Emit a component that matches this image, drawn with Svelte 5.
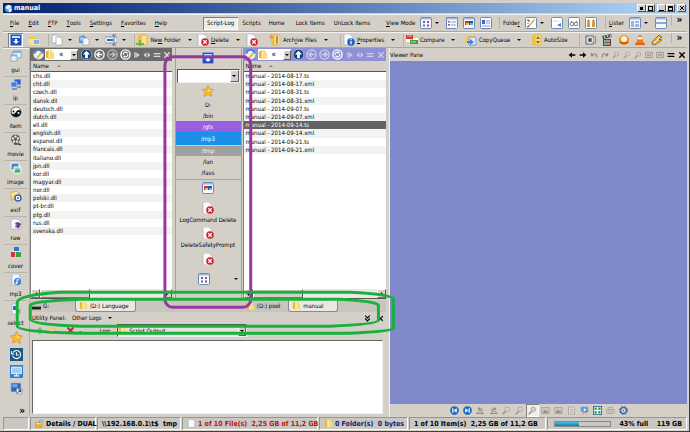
<script>
	const menus = ['File', 'Edit', 'FTP', 'Tools', 'Settings', 'Favorites', 'Help'];
	const scripts = ['Scripts', 'Home'];
	const locks = ['Lock Items', 'UnLock Items'];

	const toolGroups = [
		{ name: 'nav', items: [{ icon: 'down', on: true }, { icon: 'openfolder' }] },
		{ name: 'clip', items: [{ icon: 'copy', drop: true }, { icon: 'paste', drop: true }, { icon: 'rename', drop: true }] },
		{ name: 'new', items: [{ icon: 'newfolder', label: 'New Folder', key: 2, drop: true }] },
		{ name: 'delete', items: [{ icon: 'delete', label: 'Delete', key: 0, drop: true }, { icon: 'delete' }] },
		{ name: 'archive', items: [{ icon: 'archive', label: 'Archive Files', key: 4, drop: true }] },
		{ name: 'props', items: [{ icon: 'props', label: 'Properties', key: 0, drop: true }] },
		{ name: 'compare', items: [{ icon: 'compare', label: 'Compare', drop: true }] },
		{ name: 'queue', items: [{ icon: 'queue', label: 'CopyQueue', drop: true }] },
		{ name: 'size', items: [{ icon: 'autosize', label: 'AutoSize' }] },
		{ name: 'apps', items: [{ icon: 'speaker' }, { icon: 'clapper' }, { icon: 'ball' }, { icon: 'cone' }, { icon: 'bolt' }] }
	];

	const side = ['gui', 'ip', 'item', 'movie', 'image', 'exif', 'raw', 'cover', 'mp3', 'select'];
	const sideIcons = ['star', 'clock', 'monitor', 'shortcut'];

	const leftFiles = ['chs', 'cht', 'czech', 'dansk', 'deutsch', 'dutch', 'ell', 'english', 'espanol', 'francais',
		'italiano', 'jpn', 'kor', 'magyar', 'nor', 'polski', 'pt-br', 'ptg', 'rus', 'svenska'].map((n) => n + '.dll');
	const rightFiles = ['08-17', '08-31', '09-07', '09-14', '09-21']
		.flatMap((d) => [`manual - 2014-${d}.ts`, `manual - 2014-${d}.xml`]);
	let selected = $state('manual - 2014-09-14.ts');

	const viewerTop = ['back', 'fwd', 'undo', 'redo', 'zoomg', 'zoomg', 'zoomg', 'fit', 'fit', 'bars', 'close'];
	const viewerBottom = ['first', 'last', 'rotl', 'rotr', 'zoomg', 'zoomg', 'zoomg', 'pic', 'pic', 'sheet', 'present', 'expand', 'print', 'gear'];
	const used = 43;
</script>

{#snippet icon(name)}
	<svg class="icon" viewBox="0 0 12 12" aria-hidden="true">
		{#if name === 'app'}
			<circle cx="6" cy="6" r="5" fill="#4aa0e8" /><path d="M2 4l4-3 4 2-2 3-4 1z" fill="#e8f6ff" /><path d="M6 7l4-1v4l-3 1z" fill="#fff" />
		{:else if name === 'down' || name === 'script'}
			<rect x="0" y="0" width="12" height="12" rx="1" fill="#7fa3dd" /><rect x="1" y="1" width="10" height="10" fill="#2450b4" /><rect x="2" y="2" width="8" height="2" fill="#cfe0fa" /><path d="M6 10L3 7h2V5h2v2h2z" fill="#fff" />
		{:else if name === 'openfolder'}
			<path d="M1 2h4l1 1h4v3H1z" fill="#ecc95c" /><path d="M0 5h11l1 6H2z" fill="#f8e398" /><path d="M6 6h5v4H6z" fill="#79b6ea" />
		{:else if name === 'folder'}
			<path d="M1 2l4-1v10l-4-1z" fill="#e3b93e" /><path d="M4 1h5v3h2v7H4z" fill="#f6dc7a" /><path d="M5 2h1v8H5z" fill="#fff5c4" />
		{:else if name === 'newfolder' || name === 'archive' || name === 'autosize'}
			<path d="M2 1l7-1v10l-7 2z" fill="#eec14a" /><path d="M5 1h6v10H5z" fill="#f9e08a" stroke="#c9982e" stroke-width=".5" />
			{#if name === 'newfolder'}<path d="M0 9h3V6h2v3h3v2H5v1H3v-1H0z" fill="#6cbb3c" />
			{:else if name === 'archive'}<path d="M0 2l3-2 1 3 1 1-3 1z" fill="#f2a127" /><path d="M7 2h2v8H7z" fill="#a78132" stroke="#fff" stroke-width=".5" stroke-dasharray="1" />
			{:else}<path d="M8 2l2 3H6zM8 10L6 7h4z" fill="#8c6a18" />{/if}
		{:else if name === 'copy'}
			<path d="M1 1h5l2 2v6H1z" fill="#f7f9fc" stroke="#8d99ab" stroke-width=".6" /><path d="M5 3h4l2 2v6H5z" fill="#fff" stroke="#8d99ab" stroke-width=".6" />
		{:else if name === 'paste'}
			<path d="M1 3l4-2 3 2v6H1z" fill="#5d94d8" /><path d="M5 4h4l2 2v5H5z" fill="#f4f8fd" stroke="#8497b5" stroke-width=".6" /><circle cx="4" cy="5" r="2" fill="#a5cdf2" />
		{:else if name === 'rename'}
			<path d="M0 3h12v6H0z" fill="#e8f0fb" stroke="#6580ae" stroke-width=".7" /><path d="M2 6h6" stroke="#396ab5" stroke-width="2" /><path d="M7 1h4M9 1v10M7 11h4" stroke="#50617e" stroke-width=".8" />
		{:else if name === 'delete'}
			<path d="M1 0h6l3 3v9H1z" fill="#fafbfd" stroke="#9aa3b2" stroke-width=".6" /><circle cx="8" cy="8" r="3.8" fill="#d6202a" /><path d="M6.3 6.3l3.4 3.4M9.7 6.3L6.3 9.7" stroke="#fff" stroke-width="1.3" />
		{:else if name === 'props'}
			<path d="M1 0h6l3 3v8H1z" fill="#f6f8fb" stroke="#9aa3b2" stroke-width=".6" /><circle cx="8" cy="8" r="3.8" fill="#2060c8" /><path d="M8 7v3.3M8 5v1.2" stroke="#fff" stroke-width="1.3" />
		{:else if name === 'compare'}
			<path d="M0 1h7v4H0z" fill="#d8362f" /><path d="M1 2h5" stroke="#f8b0a8" /><path d="M7 4h5v2H7zM0 5h4v3H0z" fill="#fff" /><path d="M4 6h8v4H4z" fill="#35a53c" /><path d="M5 8h5" stroke="#b4e8b0" />
		{:else if name === 'queue'}
			<path d="M1 1h5l1 1h3v8H0z" fill="#f0cc60" /><path d="M4 3h6l1 2v6H4z" fill="#d9e9fb" stroke="#5d87c6" stroke-width=".7" /><path d="M2 7h3V5l4 3-4 3V9H2z" fill="#3f81d8" />
		{:else if name === 'speaker'}
			<rect x="1" y="1" width="9" height="10" rx="2" fill="#8e9196" /><circle cx="6" cy="6" r="3.7" fill="#d8dadd" /><circle cx="6" cy="6" r="2" fill="#55595f" /><path d="M11 2q1 4 0 8" stroke="#777" fill="none" />
		{:else if name === 'clapper'}
			<path d="M1 2l9-2 1 3-9 2zM2 5h8v7H2z" fill="#4a4d50" /><path d="M3 2l1 2M6 1l1 2M9 1l1 2M3 7h6M3 10h6" stroke="#e9eaec" /><path d="M3 8h2v1H3z" fill="#3aa745" /><path d="M6 8h2v1H6z" fill="#d43" />
		{:else if name === 'ball'}
			<circle cx="6" cy="6" r="5" fill="#f08c1c" /><circle cx="6" cy="5" r="3" fill="#fff1d0" /><path d="M2 8q4 3 8 0" stroke="#b65308" stroke-width="1.5" fill="none" />
		{:else if name === 'cone'}
			<path d="M1 10l2-2h6l2 2v1H1z" fill="#e0660d" /><path d="M5 1h2l3 8H2z" fill="#f37b16" /><path d="M4.4 3.3h3.2l.8 2H3.6z" fill="#fff" />
		{:else if name === 'bolt'}
			<path d="M1 8l7-7 3 2-3 2 3 1-7 5-3-1z" fill="#efb51c" stroke="#6c6137" stroke-width=".8" /><path d="M3 9l6-6" stroke="#fff" />
		{:else if name === 'view1' || name === 'view2' || name === 'lister' || name === 'pane'}
			<rect x=".5" y=".5" width="11" height="11" rx="1" fill="#f4f8fe" stroke="#6b8ab8" /><path d="M1 1h10v1.5H1z" fill="#9dbbe5" />
			{#if name === 'view1'}<path d="M3 4h2v2H3zM7 7.5h2v2H7z" fill="#3e69c9" /><path d="M7 4h2v2H7zM3 7.5h2v2H3z" fill="#d9493c" />
			{:else if name === 'view2'}<path d="M2 4h2v1.5H2z" fill="#d9493c" /><path d="M2 7h2v1.5H2z" fill="#3e69c9" /><path d="M5 5h5M5 8h5" stroke="#88a3cb" />
			{:else if name === 'lister'}<path d="M2 4h3v6H2zM6 4h4v2H6zM6 7h4v3H6z" fill="#9cb6dc" />
			{:else}<path d="M1 5h10v2H1z" fill="#8aa9d8" />{/if}
		{:else if name === 'thumbs'}
			<rect x=".5" y=".5" width="11" height="11" rx="1" fill="#f4f8fe" stroke="#6b8ab8" /><path d="M1 1h10v1.5H1z" fill="#9dbbe5" /><path d="M2 4h4v4H2z" fill="#c33b2f" /><path d="M6 4h4v4H6z" fill="#2b4fa0" /><path d="M3 6h3v2H3z" fill="#f0c740" /><path d="M7 6h3v2H7z" fill="#5bb0e8" />
		{:else if name === 'tiles'}
			<rect x=".5" y=".5" width="11" height="11" rx="1" fill="#f4f8fe" stroke="#6b8ab8" /><path d="M2 3h3v4H2z" fill="#3568c8" /><path d="M6 4h4M6 6h4M2 9h8" stroke="#88a3cb" />
		{:else if name === 'edit'}
			<rect x=".5" y=".5" width="11" height="11" rx="1" fill="#fff" stroke="#6b8ab8" /><path d="M3 9l6-7 1 1-6 7z" fill="#d8a735" /><path d="M2 3h2v2M3 6v1" stroke="#29417a" fill="none" /><path d="M2 10l2-1" stroke="#333" />
		{:else if name === 'note'}
			<rect x=".5" y=".5" width="11" height="11" rx="1" fill="#fff" stroke="#6b8ab8" /><path d="M6 8l4-2v4z" fill="#5a7fc0" /><path d="M2 4h6" stroke="#cdd7e8" />
		{:else if name === 'glasses'}
			<rect x=".5" y=".5" width="11" height="11" rx="1" fill="#fff" stroke="#6b8ab8" /><circle cx="4" cy="7" r="1.8" fill="none" stroke="#777" /><circle cx="8" cy="7" r="1.8" fill="none" stroke="#777" /><path d="M3 4l1 1M9 4L8 5" stroke="#777" />
		{:else if name === 'locks'}
			<rect x=".5" y=".5" width="11" height="11" rx="1" fill="#fff" stroke="#6b8ab8" /><path d="M2 6h3v4H2zM7 6h3v4H7z" fill="#dc9a1b" /><path d="M3 6V3h1v3M8 6V3h1v3" stroke="#a06c12" fill="none" />
		{:else if name === 'wrench'}
			<circle cx="6" cy="6" r="5.5" fill="#eef0f5" stroke="#97a0b4" stroke-width=".5" /><path d="M2 5a4 4 0 0 1 8 0" stroke="#3e7ed0" stroke-width="2" fill="none" /><path d="M3 10l5-6 2 1-5 6z" fill="#efb430" />
		{:else if name === 'up'}
			<circle cx="6" cy="6" r="5.7" fill="#103f7c" stroke="#dce8f8" stroke-width=".6" /><path d="M6 2l4 4H7.5v4h-3V6H2z" fill="#fff" />
		{:else if name === 'left' || name === 'right'}
			<circle cx="6" cy="6" r="5" fill="none" stroke="currentColor" stroke-width="1.4" /><path d={name === 'left' ? 'M9 6H3.5M6 3.3L3.3 6 6 8.7' : 'M3 6h5.5M6 3.3L8.7 6 6 8.7'} fill="none" stroke="currentColor" stroke-width="1.7" />
		{:else if name === 'refresh'}
			<circle cx="6" cy="6" r="5" fill="none" stroke="currentColor" stroke-width="1.5" /><path d="M3.5 6.5a2.5 2.5 0 0 1 4-2.5M8.5 5.5a2.5 2.5 0 0 1-4 2.5" stroke="currentColor" stroke-width="1.2" fill="none" /><path d="M7 2.5l2 2-2.5.5zM5 9.5l-2-2L5.5 7z" fill="currentColor" />
		{:else if name === 'play'}
			<path d="M2 2h2v8H2zM5 2l5 4-5 4z" fill="currentColor" />
		{:else if name === 'split'}
			<path d="M5 2v8L1 6zM7 2v8l4-4z" fill="currentColor" />
		{:else if name === 'bars'}
			<path d="M1 4h10M1 8h10" stroke="currentColor" stroke-width="2" />
		{:else if name === 'close'}
			<path d="M2 2l8 8M10 2l-8 8" stroke="currentColor" stroke-width="2" />
		{:else if name === 'back'}
			<path d="M1 6l5-4v3h5v2H6v3z" fill="currentColor" />
		{:else if name === 'fwd'}
			<path d="M11 6L6 2v3H1v2h5v3z" fill="currentColor" />
		{:else if name === 'undo' || name === 'redo'}
			<path d={name === 'undo' ? 'M2 3v4h4M2 7q4-5 8-1v4' : 'M10 3v4H6M10 7Q6 2 2 6v4'} stroke="#8c8a84" stroke-width="1.6" fill="none" />
		{:else if name === 'zoomg'}
			<circle cx="7" cy="4.5" r="3" fill="#e8e6e1" stroke="#93918b" /><path d="M1 11l4-4" stroke="#93918b" stroke-width="1.8" /><path d="M5.7 4.5h2.6" stroke="#93918b" />
		{:else if name === 'fit'}
			<path d="M1 2h10v8H1z" fill="none" stroke="#908e88" stroke-width="1.2" /><path d="M3 4h6v4H3z" fill="#a9a7a1" />
		{:else if name === 'first' || name === 'last'}
			<circle cx="6" cy="6" r="5.5" fill="#1b6fd0" stroke="#0d4c9a" stroke-width=".5" /><path d={name === 'first' ? 'M3 3h1.5v6H3zM9 3v6L5 6z' : 'M7.5 3H9v6H7.5zM3 3v6l4-3z'} fill="#fff" />
		{:else if name === 'rotl' || name === 'rotr'}
			<path d={name === 'rotl' ? 'M1 10h9l-5-4zM4 4h4v3' : 'M2 10h9L7 6zM8 4H4v3'} fill="none" stroke="#8c8a84" stroke-width="1.3" /><path d={name === 'rotl' ? 'M2 4l3-3v5z' : 'M10 4L7 1v5z'} fill="#8c8a84" />
		{:else if name === 'pic'}
			<path d="M1 2h10v8H1z" fill="#c9c6bf" stroke="#a19e97" /><path d="M2 9l3-4 2 2 1-1 2 3z" fill="#8c8a84" />
		{:else if name === 'sheet'}
			<path d="M2 1h6l2 2v8H2z" fill="#dcd9d2" stroke="#a19e97" /><path d="M4 5h4M4 8h4" stroke="#a19e97" />
		{:else if name === 'present'}
			<path d="M1 1h10v7H1z" fill="#4d97e2" stroke="#a9cdee" stroke-width=".6" /><path d="M3 11l3-3 3 3" stroke="#777" fill="none" /><path d="M5 3l4 2-4 2z" fill="#fff" /><circle cx="9" cy="7" r="1.5" fill="#e85a6b" />
		{:else if name === 'expand'}
			<rect width="12" height="12" fill="#1f4f96" /><path d="M1 1h10v10H1z" fill="#f4fbf2" /><path d="M2 2h3v3H2zM7 2h3v3H7zM2 7h3v3H2zM7 7h3v3H7z" fill="#1f9a30" />
		{:else if name === 'print'}
			<path d="M3 2h6v3H3zM1 5h10v5H1z" fill="#d3d0ca" stroke="#a19e97" /><path d="M3 8h6" stroke="#a19e97" />
		{:else if name === 'gear'}
			<circle cx="6" cy="6" r="4" fill="#dfe8f6" stroke="#4a6792" stroke-width="2" /><circle cx="6" cy="6" r="5" fill="none" stroke="#4a6792" stroke-width="1.5" stroke-dasharray="2" /><circle cx="6" cy="6" r="1.2" fill="#4a6792" />
		{:else if name === 'star'}
			<path d="M6 .5l1.7 3.6 4 .5-2.9 2.7.8 4L6 9.4l-3.6 1.9.8-4L.3 4.6l4-.5z" fill="#f9bd2c" stroke="#c98510" stroke-width=".5" /><path d="M6 2l1 3 3 .5-3.5 1z" fill="#ffe696" />
		{:else if name === 'clock'}
			<rect width="12" height="12" fill="#1b5a88" /><path d="M3 4a3.7 3.7 0 1 1-.5 3" fill="none" stroke="#fff" /><path d="M1.5 3v2.5H4M6 4v2.5h2" fill="none" stroke="#fff" />
		{:else if name === 'monitor'}
			<rect width="12" height="12" fill="#2f7fce" /><path d="M1.5 2h9v6h-9z" fill="#9fcdf4" stroke="#fff" stroke-width=".8" /><path d="M6 8v2M3.5 10h5" stroke="#fff" />
		{:else if name === 'shortcut'}
			<path d="M1 1h9v8H1z" fill="#2f63b8" stroke="#8fa9d4" stroke-width=".6" /><path d="M2 2h5v3H2z" fill="#6fa4e4" /><path d="M6 6h5v5H6z" fill="#fff" stroke="#778" stroke-width=".6" /><path d="M7 10l2.5-2.5M7.5 7.2h2.3v2.3" stroke="#2353a8" fill="none" />
		{:else if name === 'gui'}
			<path d="M3 1h8v7H3z" fill="#eef4fc" stroke="#6b8ab8" stroke-width=".7" /><path d="M3 1h8v2H3z" fill="#7fb1e8" /><path d="M1 5h6v6H1z" fill="#fff" stroke="#6b8ab8" stroke-width=".7" /><path d="M1 5h6v1.5H1z" fill="#7fb1e8" /><path d="M6 3v6M2 9h4" stroke="#aabdd9" stroke-width=".6" />
		{:else if name === 'ip'}
			<path d="M4 1h7v6H4z" fill="#2c62cf" stroke="#c2d3ee" stroke-width=".8" /><path d="M1 4h6v5H1z" fill="#3c7ce0" stroke="#c2d3ee" stroke-width=".8" /><path d="M2 11h5M7 9h4" stroke="#6c7f9f" stroke-width="1.5" />
		{:else if name === 'item'}
			<circle cx="6" cy="6" r="5" fill="#111" /><path d="M1 6a5 5 0 0 1 10-1C9 3 7 4 6 6S2 9 1 6z" fill="#fff" /><circle cx="3.5" cy="5.5" r="1" /><circle cx="8.5" cy="7" r="1" fill="#fff" /><circle cx="6" cy="6" r="5" fill="none" stroke="#222" stroke-width=".7" />
		{:else if name === 'movie'}
			<circle cx="5.5" cy="5" r="4.5" fill="#5a5a5a" /><g fill="#e6e6e6"><circle cx="5.5" cy="2.5" r="1.2" /><circle cx="3" cy="4.5" r="1.2" /><circle cx="8" cy="4.5" r="1.2" /><circle cx="4" cy="7.5" r="1.2" /><circle cx="7" cy="7.5" r="1.2" /></g><path d="M4 10h5l2 1" stroke="#444" stroke-width="1.5" fill="none" />
		{:else if name === 'image'}
			<path d="M1 1h8v7H1z" fill="#3f88dd" stroke="#fff" /><path d="M1.5 6l3-2 4 3H1.5z" fill="#3fa84a" /><path d="M4 5h7v6H4z" fill="#8cc4f3" stroke="#fff" /><path d="M4.5 9l3-2 3 2v1.5h-6z" fill="#4cb63e" />
		{:else if name === 'exif'}
			<path d="M1 2l5-1 4 2v6l-9 1z" fill="#f2cf6b" stroke="#c99c36" stroke-width=".5" /><path d="M3 3v3M6 2v3" stroke="#fff" /><circle cx="8" cy="8" r="3" fill="#fff" stroke="#2e62b8" stroke-width="1.4" /><circle cx="8" cy="8" r="1" fill="#2e62b8" />
		{:else if name === 'raw'}
			<path d="M1 1h7l3 3v7H1z" fill="#f6f8fb" stroke="#93a2ba" stroke-width=".6" /><path d="M5 5l3-1 3 2-2 4-4-1z" fill="#2455c3" /><path d="M8 4l3 2-2 2z" fill="#e12828" /><path d="M5 5l2 2-2 2z" fill="#f1c62c" /><path d="M7 8l3 0-2 3z" fill="#a4259b" />
		{:else if name === 'cover'}
			<path d="M4 1l3-1 2 1v4H4z" fill="#3b6fd2" /><path d="M1 6h4v5H1z" fill="#d4372f" /><path d="M6 6h5v5H6z" fill="#3ba243" /><path d="M1 6l1-1h4v1zM6 6l1-1h4v1zM4 1l1-1h4v1z" fill="#fff" opacity=".5" />
		{:else if name === 'mp3'}
			<path d="M2 0h6l2 2v9H2z" fill="#f4f7fc" stroke="#93a2ba" stroke-width=".6" /><circle cx="7.5" cy="7.5" r="3.5" fill="#3b7fda" /><path d="M7 9V5.5l2 .5" stroke="#fff" fill="none" /><circle cx="6.5" cy="9" r="1" fill="#fff" />
		{:else if name === 'select'}
			<path d="M2 1h6l2 2v8H2z" fill="#f4f7fc" stroke="#93a2ba" stroke-width=".6" /><path d="M3 3h4v4H3z" fill="#3568c8" /><path d="M6 6h4v4H6z" fill="#6a9de0" />
		{:else if name === 'drive'}
			<path d="M0 6h12v4H0z" fill="#222" /><path d="M1 5h10v1H1z" fill="#aaa" />
		{:else if name === 'lock'}
			<path d="M6 5V2q2-2 4 0v2" fill="none" stroke="#9a9a9a" stroke-width="1.3" /><path d="M1 5h8v6H1z" fill="#f0b92d" stroke="#a8761a" stroke-width=".6" /><path d="M2 6h6" stroke="#ffeaa0" />
		{:else if name === 'page'}
			<path d="M2 1h6l2 2v8H2z" fill="#fff" stroke="#b2b2b2" stroke-width=".7" />
		{:else if name === 'raise'}
			<path d="M5 11V3L2 6M5 3l3 3" stroke="#7ab76c" fill="none" stroke-width="2" />
		{:else if name === 'red'}
			<path d="M2 2l8 8M10 2l-8 8" stroke="#d02020" stroke-width="2.5" />
		{/if}
	</svg>
{/snippet}

{#snippet drop()}<span class="drop"></span>{/snippet}

{#snippet pane(cls, files)}
	<section class="pane {cls}">
		<div class="pane-bar">
			<button aria-label="Configure">{@render icon('wrench')}</button>
			<label class="path">{@render icon('folder')}
				<select aria-label="Path"><option>«</option></select>
				<span class="combo-btn"></span>
			</label>
			{#each ['up', 'left', 'right', 'refresh'] as name}
				<button class={name} aria-label={name}>{@render icon(name)}</button>
			{/each}
			<span class="minis">
				{#each ['play', 'split', 'bars', 'close'] as name}
					<button class={name} aria-label={name}>{@render icon(name)}</button>
				{/each}
			</span>
		</div>
		<div class="files">
			<div class="col-head">Name <span class="sort"></span></div>
			<ul>
				{#each files as file}
					<li class:selected={file === selected}><button onclick={() => (selected = file)}>{file}</button></li>
				{/each}
			</ul>
			<div class="scroll"><i class="arrow prev"></i><i class="thumb"></i><i class="arrow next"></i></div>
		</div>
	</section>
{/snippet}

<div class="window">
	<header class="title">
		{@render icon('app')}<h1>manual</h1>
		<span class="title-buttons">
			<button aria-label="Previous"><i class="dot"></i></button><button aria-label="Dock"><i class="dock"></i></button>
			<button class="gap" aria-label="Minimize"><i class="min"></i></button><button aria-label="Maximize"><i class="max"></i></button>
			<button class="gap" aria-label="Close">{@render icon('close')}</button>
		</span>
	</header>

	<nav class="menu">
		<div class="grp menus">
			{#each menus as m}<button><u>{m[0]}</u>{m.slice(1)}</button>{/each}
		</div>
		<div class="grp scripts">
			<button class="pressed">Script-Log</button>
			{#each scripts as m}<button>{m}</button>{/each}
			<span class="locks">{#each locks as m}<button>{m}</button>{/each}</span>
		</div>
		<div class="grp">
			<button><u>V</u>iew Mode</button>
			<button aria-label="Icons">{@render icon('view1')}{@render drop()}</button>
			<button class="pressed" aria-label="Details">{@render icon('view2')}</button>
			<button aria-label="Thumbnails">{@render icon('thumbs')}</button>
			<button aria-label="Tiles">{@render icon('tiles')}</button>
		</div>
		<div class="grp sep">
			<button>Folde<u>r</u></button>
			<button aria-label="Edit">{@render icon('edit')}{@render drop()}</button>
			<button aria-label="Note">{@render icon('note')}</button>
			<button aria-label="Find">{@render icon('glasses')}</button>
			<button aria-label="Lock">{@render icon('locks')}</button>
		</div>
		<div class="grp sep">
			<button><u>L</u>ister</button>
			<button aria-label="Layout">{@render icon('lister')}{@render drop()}</button>
			<button aria-label="Pane">{@render icon('pane')}</button>
		</div>
		<button class="more">»</button>
	</nav>

	<div class="tools">
		{#each toolGroups as g}
			<div class="grp {g.name}">
				{#each g.items as t}
					<button class:pressed={t.on} aria-label={t.label ?? t.icon}>
						{@render icon(t.icon)}
						{#if t.label}
							<span class="text">{#if t.key !== undefined}{t.label.slice(0, t.key)}<u>{t.label[t.key]}</u>{t.label.slice(t.key + 1)}{:else}{t.label}{/if}</span>
						{/if}
						{#if t.drop}{@render drop()}{/if}
					</button>
				{/each}
			</div>
		{/each}
		<button class="more">»</button>
	</div>

	<main>
		<aside>
			{#each side as s}
				<button class="side-item">{@render icon(s)}<span>{s}</span></button>
			{/each}
			{#each sideIcons as s}
				<button class="side-icon" aria-label={s}>{@render icon(s)}</button>
			{/each}
			<button class="side-more">»</button>
		</aside>

		<div class="work">
			<div class="panes">
				{@render pane('source', leftFiles)}
				<div class="middle">
					<button class="mid-top" aria-label="Script">{@render icon('script')}</button>
					<label class="combo"><input aria-label="Command" /><span class="combo-btn"></span></label>
					<button class="mid-star" aria-label="Favorite">{@render icon('star')}</button>
					<button class="link">D:</button>
					<button class="link">/bin</button>
					<button class="link gfx">/gfx</button>
					<button class="link mp3">/mp3</button>
					<button class="link tmp">/tmp</button>
					<button class="link">/lan</button>
					<button class="link">/favs</button>
					<button class="mid-icon line" aria-label="Thumbnails">{@render icon('thumbs')}</button>
					<button class="mid-del">{@render icon('delete')}LogCommand Delete</button>
					<button class="mid-del">{@render icon('delete')}DeleteSafetyPrompt</button>
					<button class="mid-icon" aria-label="Delete">{@render icon('delete')}</button>
					<button class="mid-view" aria-label="View">{@render icon('view1')}{@render drop()}</button>
				</div>
				{@render pane('dest', rightFiles)}
			</div>

			<div class="tabs">
				<div class="tabset">
					<button class="tab drive">{@render icon('drive')}G:</button>
					<button class="tab active">{@render icon('folder')}(D:) Language</button>
				</div>
				<span class="tab-more">..</span>
				<div class="tabset">
					<button class="tab">{@render icon('folder')}(D:) pool</button>
					<button class="tab active wide">{@render icon('folder')}manual</button>
				</div>
			</div>

			<div class="utility">
				<span>Utility Panel:</span>
				<button>Other Logs {@render drop()}</button>
				<button class="fold" aria-label="Collapse">
					<svg class="icon" viewBox="0 0 12 12"><path d="M2 1l4 4 4-4M2 6l4 4 4-4" fill="none" stroke="#000" stroke-width="2" /></svg>
				</button>
				<button aria-label="Close">{@render icon('close')}</button>
			</div>
			<div class="log">
				<button aria-label="Up">{@render icon('raise')}</button>
				<button aria-label="Open">{@render icon('openfolder')}</button>
				<button class="log-x" aria-label="Clear">{@render icon('red')}</button>
				<button aria-label="Options">–</button>
				<label for="log">Log:</label>
				<span class="combo">{@render icon('folder')}<select id="log"><option>Script Output</option></select><span class="combo-btn"></span></span>
			</div>
			<textarea aria-label="Output"></textarea>
		</div>

		<section class="viewer">
			<div class="viewer-head">
				<h2>Viewer Pane</h2>
				{#each viewerTop as v}<button aria-label={v}>{@render icon(v)}</button>{/each}
			</div>
			<div class="canvas"></div>
			<div class="viewer-foot">
				{#each viewerBottom as v, i}<button class:pressed={i === 6} aria-label={v}>{@render icon(v)}</button>{/each}
			</div>
		</section>
	</main>

	<footer>
		<span class="cell"></span>
		<span class="cell">{@render icon('lock')}Details / DUAL</span>
		<span class="cell">\\192.168.0.1\t$&nbsp; tmp</span>
		<span class="cell red">{@render icon('page')}1 of 10 File(s)&nbsp; 2,25 GB of 11,2 GB</span>
		<span class="cell navy">{@render icon('folder')}0 Folder(s)&nbsp; 0 bytes</span>
		<span class="cell">1 of 10 Item(s)&nbsp; 2,25 GB of 11,2 GB</span>
		<span class="cell disk">
			<span class="meter"><i style="width: {used}%"></i></span>
			<span>{used}% full</span><span>119 GB</span>
		</span>
	</footer>

	<svg class="marks" viewBox="0 0 690 432" aria-hidden="true">
		<rect x="165" y="57" width="86" height="251" rx="8" stroke="#9b35a3" />
		<path d="M60 293Q18 296 17 303V327Q18 331 50 333L80 334H350Q393 332 394 329V300Q393 295 350 293H80z" stroke="#18b13c" />
		<path d="M60 301Q31 303 30 306V320Q31 324 60 326L80 327H330Q378 325 379 321V306Q377 302 340 300H80z" stroke="#18b13c" />
	</svg>
</div>

<style>
	:global(body) {
		background: #d4d0c8;
	}
	.window {
		position: relative;
		box-sizing: border-box;
		min-height: 100vh;
		display: flex;
		flex-direction: column;
		padding: 3px 2px 1px 3px;
		border-right: 1px solid #404040;
		border-bottom: 1px solid #404040;
		background: #d4d0c8;
		color: #000;
		font: 6px/10px "DejaVu Sans Condensed", Tahoma, "DejaVu Sans", sans-serif;
		overflow: hidden;
	}
	.window :global(*) {
		box-sizing: border-box;
	}
	button, input, select, textarea {
		font: inherit;
		color: inherit;
		background: none;
		border: 0;
		padding: 0;
		margin: 0;
		min-width: 0;
		border-radius: 0;
		white-space: nowrap;
	}
	button {
		display: flex;
		align-items: center;
		justify-content: center;
	}
	h1, h2, ul {
		margin: 0;
		padding: 0;
		font: inherit;
		list-style: none;
	}
	.icon {
		width: 12px;
		height: 12px;
		flex: none;
		display: block;
	}
	.drop {
		border: 2px solid transparent;
		border-top-color: #111;
		border-bottom: 0;
		margin: 0 6px 0 7px;
	}
	.pressed {
		background: #efede9;
		box-shadow: inset 1px 1px #808080, inset -1px -1px #fff;
	}

	.title {
		height: 10px;
		display: flex;
		align-items: center;
		background: linear-gradient(90deg, #0a246a, #0f2e7a 8%, #a6caf0 92%);
		color: #fff;
	}
	.title .icon {
		width: 9px;
		height: 9px;
		margin: 0 1px 0 1px;
	}
	.title h1 {
		font-size: 7px;
		font-weight: bold;
	}
	.title-buttons {
		display: flex;
		margin-left: auto;
		padding-right: 1px;
	}
	.title-buttons button {
		width: 9px;
		height: 8px;
		background: #d4d0c8;
		color: #000;
		border: 1px solid #fff;
		border-right-color: #505050;
		border-bottom-color: #505050;
	}
	.title-buttons .gap {
		margin-left: 2px;
	}
	.title-buttons .icon {
		width: 6px;
		height: 6px;
		margin: 0;
	}
	.dot, .dock, .min, .max {
		width: 5px;
		height: 5px;
		border: 1px solid #000;
	}
	.dot {
		width: 3px;
		height: 3px;
		background: #000;
	}
	.min {
		border-width: 0 0 1px;
	}
	.max {
		border-top-width: 2px;
	}

	.menu, .tools {
		display: grid;
		align-items: center;
		border-top: 1px solid #f4f2ee;
		border-bottom: 1px solid #aaa69e;
		padding-left: 5px;
	}
	.menu {
		height: 18px;
		margin-top: 1px;
		grid-template-columns: 195px 180px 116px 106px 1fr 16px;
	}
	.tools {
		height: 16px;
		grid-template-columns: 40px 86px 63px 72px 71px 63px 62px 65px 49px 1fr 16px;
	}
	.grp {
		display: flex;
		align-items: center;
		min-width: 0;
	}
	.menus {
		gap: 9px;
		padding-left: 2px;
	}
	.scripts {
		gap: 8px;
	}
	.scripts button {
		height: 13px;
	}
	.scripts .pressed {
		padding: 0 4px;
		margin-right: -4px;
	}
	.locks {
		display: flex;
		gap: 9px;
		padding-left: 3px;
	}
	.menu .grp:nth-child(n + 3) {
		gap: 5px;
		padding-left: 3px;
	}
	.menu .drop {
		margin: 0 2px 0 3px;
	}
	.sep {
		border-left: 1px solid #b5b1a9;
		height: 12px;
	}
	.more {
		font-size: 10px;
		font-weight: bold;
		align-self: start;
		border-left: 1px solid #b5b1a9;
	}
	.tools .icon {
		margin-right: 2px;
	}
	.tools .nav button {
		width: 15px;
		height: 14px;
		margin-right: 3px;
	}
	.tools .nav .icon {
		margin: 0;
	}
	.tools .clip .drop {
		margin: 0 6px 0 3px;
	}
	.clip, .new, .props, .compare, .apps {
		border-left: 1px solid #b5b1a9;
		padding-left: 2px;
	}
	.apps {
		justify-content: space-between;
		padding: 0 6px 0 4px;
	}

	main {
		flex: 1;
		display: grid;
		grid-template-columns: 27px 359fr 298fr;
	}
	aside {
		display: flex;
		flex-direction: column;
		border-top: 1px solid #f4f2ee;
		border-right: 1px solid #b5b1a9;
		padding-left: 1px;
	}
	.side-item {
		height: 28px;
		flex-direction: column;
		gap: 3px;
		border-bottom: 1px solid #b9b5ad;
		margin-right: 2px;
	}
	.side-item:nth-child(10) {
		border: 0;
	}
	.side-icon {
		height: 17px;
	}
	.side-icon .icon {
		width: 13px;
		height: 13px;
	}
	.side-more {
		font-size: 10px;
		font-weight: bold;
		margin: auto 4px 1px auto;
	}

	.work {
		display: flex;
		flex-direction: column;
		min-width: 0;
		padding-right: 3px;
	}
	.panes {
		display: grid;
		grid-template-columns: 142fr 71px 144fr;
		height: 251px;
	}
	.pane {
		display: flex;
		flex-direction: column;
		min-width: 0;
	}
	.pane-bar {
		height: 13px;
		display: flex;
		align-items: center;
		gap: 1px;
		background: #6c6c6c;
		color: #fff;
		padding-left: 2px;
	}
	.dest .pane-bar {
		background: #9090d4;
	}
	.pane-bar .icon {
		width: 11px;
		height: 11px;
	}
	.pane-bar .right {
		color: #c0c0c0;
	}
	.dest .left, .dest .right, .dest .minis {
		color: #cdcdf2;
	}
	.path {
		display: flex;
		align-items: center;
		width: 33px;
		height: 11px;
		margin-right: 1px;
		background: #fff;
		color: #000;
		font-size: 8px;
	}
	.path .icon {
		width: 10px;
	}
	.path select {
		padding-left: 4px;
	}
	.pane-bar > button {
		width: 12px;
	}
	.minis {
		display: flex;
		flex: 1;
		justify-content: space-around;
		color: #ddd;
	}
	.pane-bar .minis .icon {
		width: 8px;
		height: 8px;
	}
	select {
		appearance: none;
		flex: 1;
		height: 10px;
		padding-left: 2px;
	}
	.combo-btn {
		width: 8px;
		height: 10px;
		flex: none;
		display: grid;
		place-items: center;
		background: #d4d0c8;
		border: 1px solid #fff;
		border-right-color: #606060;
		border-bottom-color: #606060;
	}
	.combo-btn::after {
		content: "";
		border: 2px solid transparent;
		border-top-color: #000;
		border-bottom: 0;
	}
	.files {
		flex: 1;
		display: flex;
		flex-direction: column;
		background: #fff;
		border-left: 1px solid #808080;
	}
	.col-head {
		height: 11px;
		padding-left: 2px;
		background: #d4d0c8;
		border-bottom: 1px solid #555;
	}
	.sort {
		display: inline-block;
		border: 2px solid transparent;
		border-bottom-color: #8c7f78;
		border-top: 0;
		margin: 0 0 1px 6px;
	}
	.pane ul {
		display: grid;
		grid-auto-rows: 1fr;
		height: 163px;
	}
	.dest ul {
		height: 82px;
	}
	.pane li {
		display: flex;
		align-items: center;
		min-height: 0;
		padding-left: 2px;
	}
	.pane li button {
		line-height: 8px;
	}
	.pane li:nth-child(even) {
		background: #f3f3f2;
	}
	.pane li.selected {
		background: #636363;
		color: #fff;
	}
	.scroll {
		height: 10px;
		margin-top: auto;
		display: flex;
		background: #ebe9e5;
		border-bottom: 1px solid #555;
	}
	.scroll .arrow, .scroll .thumb {
		background: #d4d0c8;
		border: 1px solid #fff;
		border-right-color: #555;
		border-bottom-color: #777;
	}
	.scroll .arrow {
		width: 9px;
		display: grid;
		place-items: center;
	}
	.scroll .thumb {
		width: 50px;
	}
	.arrow::after {
		content: "";
		border: 2px solid transparent;
	}
	.prev::after {
		border-right-color: #000;
		border-left: 0;
	}
	.next::after {
		border-left-color: #000;
		border-right: 0;
	}
	.next {
		margin-left: auto;
	}

	.middle {
		display: flex;
		flex-direction: column;
		margin: 0 1px 0 3px;
		padding-top: 3px;
		border-left: 1px solid #a5a199;
		border-right: 1px solid #a5a199;
	}
	.mid-top {
		height: 13px;
	}
	.middle .combo {
		height: 14px;
		margin: 5px 1px 0;
	}
	.combo {
		display: flex;
		align-items: center;
		background: #fff;
		border: 1px solid #555;
		border-right-color: #eee;
		border-bottom-color: #eee;
	}
	.combo input {
		flex: 1;
		width: 100%;
	}
	.middle .combo-btn {
		height: 12px;
		width: 9px;
	}
	.mid-star {
		height: 16px;
	}
	.link {
		height: 11px;
		flex: none;
	}
	.gfx {
		background: #9660e0;
		color: #fff;
	}
	.mp3 {
		height: 13px;
		background: #1b90e8;
		color: #fff;
	}
	.tmp {
		margin-top: 1px;
		height: 10px;
		background: #a0a0a0;
		color: #fff;
	}
	.mid-icon {
		height: 16px;
	}
	.line {
		border-top: 1px solid #aaa69e;
		margin: 1px 0 6px;
	}
	.mid-del {
		flex-direction: column;
		gap: 1px;
		height: 25px;
	}
	.mid-view {
		height: 20px;
		margin-top: 2px;
		padding-left: 22px;
		justify-content: flex-end;
	}
	.mid-view .icon {
		margin: 0 auto 0 0;
	}
	.mid-view .drop {
		margin-right: 3px;
	}

	.tabs {
		display: grid;
		grid-template-columns: 203fr 11px 144fr;
		height: 12px;
		margin-top: 1px;
		background: #c8c5bd;
	}
	.tabset {
		display: flex;
	}
	.tab {
		padding: 0 8px 0 3px;
		gap: 2px;
	}
	.tab .icon {
		width: 9px;
		height: 9px;
	}
	.tab.drive {
		padding-right: 26px;
		padding-left: 2px;
	}
	.active {
		background: #ebe8e2;
		border: 1px solid #8a8a8a;
		border-top: 0;
		border-radius: 0 0 3px 3px;
		padding-right: 6px;
	}
	.wide {
		padding-right: 14px;
	}
	.utility {
		display: flex;
		align-items: center;
		height: 12px;
		gap: 6px;
		padding: 0 2px;
	}
	.utility .icon {
		width: 7px;
		height: 7px;
	}
	.fold {
		margin-left: auto;
	}
	.log {
		display: flex;
		align-items: center;
		height: 13px;
		gap: 4px;
		padding-left: 6px;
		margin-bottom: 3px;
	}
	.log .icon {
		width: 9px;
		height: 9px;
	}
	.log-x {
		margin-left: 4px;
	}
	.log label {
		margin-left: 14px;
	}
	.log .combo {
		width: 130px;
		height: 13px;
		margin-left: 2px;
		background: #e6e3dd;
	}
	textarea {
		flex: 1;
		margin: 0 3px 3px 2px;
		background: #fff;
		border: 1px solid #666;
		border-right-color: #f4f2ee;
		border-bottom-color: #f4f2ee;
		resize: none;
	}

	.viewer {
		display: flex;
		flex-direction: column;
		min-width: 0;
		border-left: 1px solid #f4f2ee;
	}
	.viewer-head, .viewer-foot {
		display: flex;
		align-items: center;
		height: 13px;
	}
	.viewer-head h2 {
		margin-right: auto;
	}
	.viewer-head button {
		width: 11px;
	}
	.viewer-head .icon {
		width: 8px;
		height: 8px;
	}
	.canvas {
		flex: 1;
		background: #8088cc;
	}
	.viewer-foot {
		justify-content: center;
	}
	.viewer-foot button {
		width: 13px;
		height: 13px;
	}
	.viewer-foot .icon {
		width: 9px;
		height: 9px;
	}

	footer {
		display: grid;
		grid-template-columns: 26px 66px 84px 136px 89px 137px 1fr;
		height: 13px;
		gap: 1px;
		font-size: 7px;
		font-weight: bold;
		white-space: nowrap;
	}
	.cell {
		display: flex;
		align-items: center;
		gap: 2px;
		padding-left: 4px;
		background: #c9c8c5;
		border: 1px solid #98958e;
		border-right-color: #fff;
		border-bottom-color: #fff;
	}
	.cell .icon {
		width: 9px;
		height: 9px;
	}
	.red {
		color: #c01010;
	}
	.navy {
		color: #14246e;
	}
	.disk {
		justify-content: space-between;
		padding: 0 4px 0 6px;
	}
	.meter {
		width: 57px;
		height: 6px;
		border: 1px solid #888;
	}
	.meter i {
		display: block;
		height: 100%;
		background: linear-gradient(#4cc4e4, #0d7fa8);
	}

	.marks {
		position: absolute;
		left: 0;
		top: 0;
		width: 100%;
		height: 100%;
		fill: none;
		stroke-width: 3;
		pointer-events: none;
	}
</style>
